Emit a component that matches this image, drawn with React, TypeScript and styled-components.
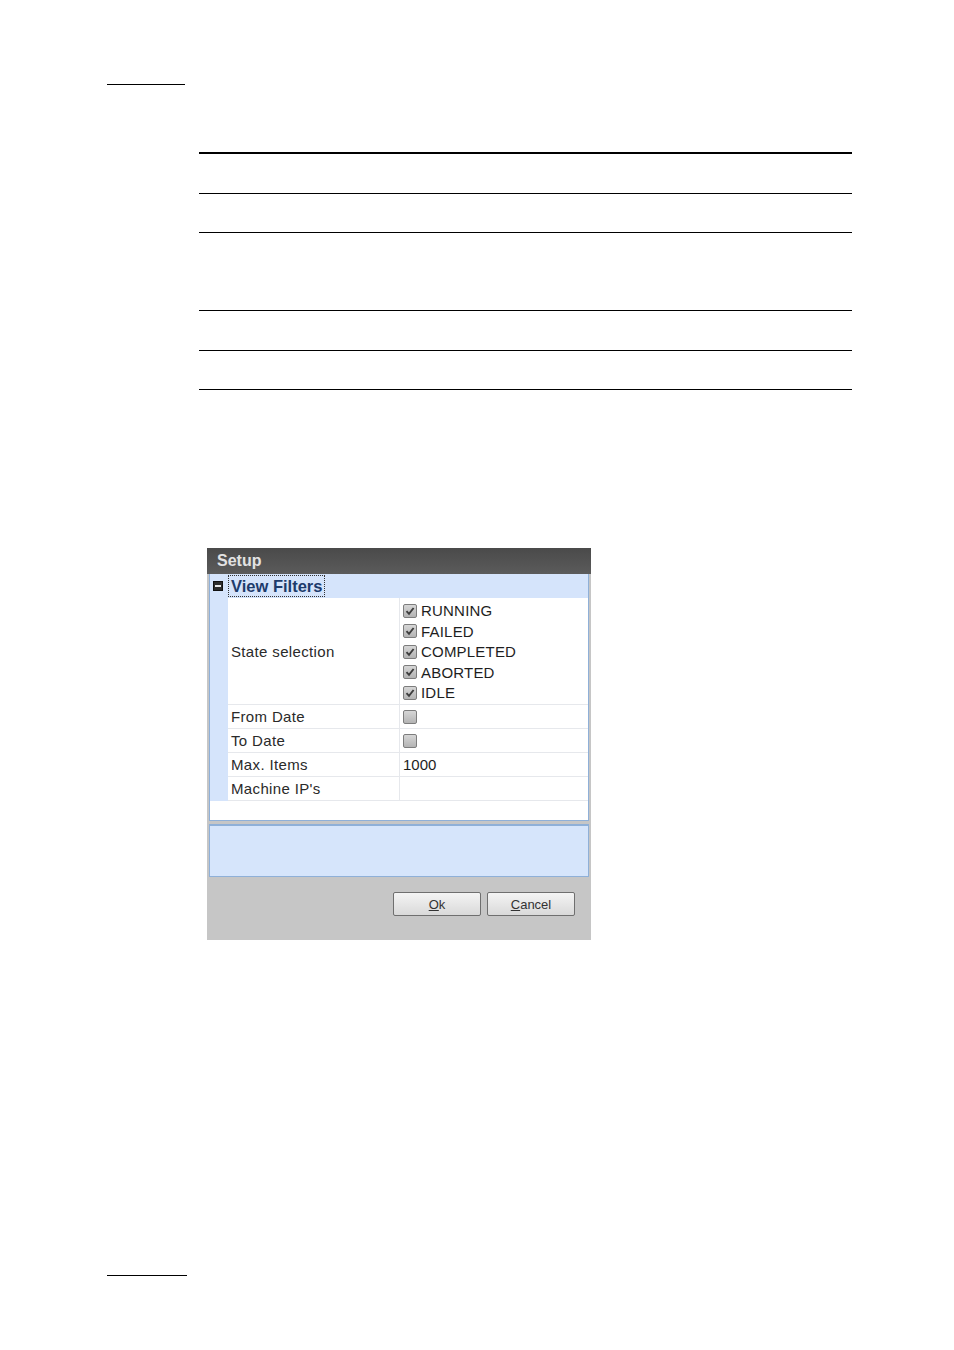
import React from "react";
import styled, { createGlobalStyle } from "styled-components";

const GlobalStyle = createGlobalStyle`
  html, body {
    margin: 0;
    padding: 0;
    background: #ffffff;
  }
  body {
    font-family: "Liberation Sans", Arial, sans-serif;
  }
`;

const Page = styled.div`
  width: 954px;
  min-height: 1350px;
  display: flex;
  flex-direction: column;
  align-items: flex-start;
`;

const Rule = styled.div<{ $top: number; $left: number; $width: number }>`
  margin-top: ${({ $top }) => $top}px;
  margin-left: ${({ $left }) => $left}px;
  width: ${({ $width }) => $width}px;
  height: 1px;
  background: #000;
`;

const SpecTable = styled.div`
  margin-top: 67px;
  margin-left: 199px;
  width: 653px;
  border-top: 2px solid #000;
  display: flex;
  flex-direction: column;
`;

const SpecRow = styled.div<{ $h: number }>`
  height: ${({ $h }) => $h}px;
  border-bottom: 1px solid #000;
`;

const Dialog = styled.div`
  margin-top: 158px;
  margin-left: 207px;
  width: 384px;
  height: 392px;
  display: flex;
  flex-direction: column;
  background: #c6c6c6;
`;

const TitleBar = styled.div`
  height: 26px;
  display: flex;
  align-items: center;
  padding-left: 10px;
  background: linear-gradient(#4a4a4a, #5b5b5b);
  color: #e2e2e2;
  font-weight: bold;
  font-size: 16px;
`;

const Grid = styled.div`
  margin: 0 2px;
  height: 247px;
  box-sizing: border-box;
  border: 1px solid #8fb0d8;
  border-top: none;
  background: #ffffff;
  display: flex;
  flex-direction: column;
`;

const CategoryRow = styled.div`
  height: 24px;
  display: flex;
  align-items: center;
  background: #d5e4fb;
`;

const Collapse = styled.span`
  width: 10px;
  height: 10px;
  margin-left: 3px;
  margin-right: 5px;
  background: #2c2c2c;
  border: 1px solid #111;
  box-sizing: border-box;
  display: flex;
  align-items: center;
  justify-content: center;
  &::after {
    content: "";
    width: 6px;
    height: 2px;
    background: #e8e8e8;
  }
`;

const CategoryTitle = styled.span`
  height: 20px;
  display: flex;
  align-items: center;
  padding: 0 2px;
  border: 1px dotted #333;
  color: #1d3b6c;
  font-weight: bold;
  font-size: 16.5px;
`;

const PropRow = styled.div<{ $h: number }>`
  height: ${({ $h }) => $h}px;
  display: flex;
`;

const Margin = styled.div`
  width: 18px;
  background: #d5e4fb;
`;

const LabelCell = styled.div`
  width: 172px;
  box-sizing: border-box;
  padding-left: 3px;
  display: flex;
  align-items: center;
  border-bottom: 1px solid #e6e8ec;
  border-right: 1px solid #e6e8ec;
  color: #2a2a2a;
  font-size: 15px;
  letter-spacing: 0.35px;
`;

const ValueCell = styled.div`
  flex: 1;
  box-sizing: border-box;
  padding-left: 3px;
  display: flex;
  align-items: center;
  border-bottom: 1px solid #e6e8ec;
  color: #1e1e1e;
  font-size: 15px;
`;

const StateList = styled.div`
  display: flex;
  flex-direction: column;
  padding-top: 1px;
`;

const StateItem = styled.div`
  height: 20.5px;
  display: flex;
  align-items: center;
  gap: 4px;
  font-size: 15px;
  letter-spacing: 0.2px;
  color: #1e1e1e;
`;

const Box = styled.span`
  width: 14px;
  height: 14px;
  box-sizing: border-box;
  border: 1px solid #7d7d7d;
  border-radius: 2px;
  background: linear-gradient(#d6d6d6, #b4b4b4);
  display: inline-flex;
  align-items: center;
  justify-content: center;
`;

const Filler = styled.div`
  flex: 1;
`;

const Description = styled.div`
  margin: 3px 2px 0;
  height: 53px;
  box-sizing: border-box;
  border: 1px solid #8fb0d8;
  border-top: 2px solid #8fb0d8;
  background: #d6e5fb;
`;

const ButtonBar = styled.div`
  display: flex;
  justify-content: flex-end;
  gap: 6px;
  padding: 15px 16px 0 0;
`;

const Button = styled.button`
  width: 88px;
  height: 24px;
  border: 1px solid #6f6f6f;
  border-radius: 2px;
  background: linear-gradient(#f4f4f4, #d9d9d9);
  font-family: "Liberation Sans", Arial, sans-serif;
  font-size: 13px;
  color: #333;
  padding: 0;
  u {
    text-decoration: underline;
  }
`;

const Check = ({ checked }: { checked: boolean }) => (
  <Box>
    {checked && (
      <svg width="10" height="10" viewBox="0 0 10 10">
        <path d="M1.5 5.2 L4 7.8 L8.6 2" fill="none" stroke="#3d3d3d" strokeWidth="1.9" />
      </svg>
    )}
  </Box>
);

const states = ["RUNNING", "FAILED", "COMPLETED", "ABORTED", "IDLE"];

const props: { label: string; value: React.ReactNode }[] = [
  { label: "From Date", value: <Check checked={false} /> },
  { label: "To Date", value: <Check checked={false} /> },
  { label: "Max. Items", value: "1000" },
  { label: "Machine IP's", value: "" },
];

export default function App() {
  return (
    <Page>
      <GlobalStyle />
      <Rule $top={84} $left={107} $width={78} />
      <SpecTable>
        <SpecRow $h={39} />
        <SpecRow $h={38} />
        <SpecRow $h={77} />
        <SpecRow $h={39} />
        <SpecRow $h={38} />
      </SpecTable>

      <Dialog>
        <TitleBar>Setup</TitleBar>
        <Grid>
          <CategoryRow>
            <Collapse />
            <CategoryTitle>View Filters</CategoryTitle>
          </CategoryRow>
          <PropRow $h={107}>
            <Margin />
            <LabelCell>State selection</LabelCell>
            <ValueCell>
              <StateList>
                {states.map(s => (
                  <StateItem key={s}>
                    <Check checked />
                    {s}
                  </StateItem>
                ))}
              </StateList>
            </ValueCell>
          </PropRow>
          {props.map(p => (
            <PropRow key={p.label} $h={24}>
              <Margin />
              <LabelCell>{p.label}</LabelCell>
              <ValueCell>{p.value}</ValueCell>
            </PropRow>
          ))}
          <Filler />
        </Grid>
        <Description />
        <ButtonBar>
          <Button>
            <u>O</u>k
          </Button>
          <Button>
            <u>C</u>ancel
          </Button>
        </ButtonBar>
      </Dialog>

      <Rule $top={335} $left={107} $width={80} />
    </Page>
  );
}
